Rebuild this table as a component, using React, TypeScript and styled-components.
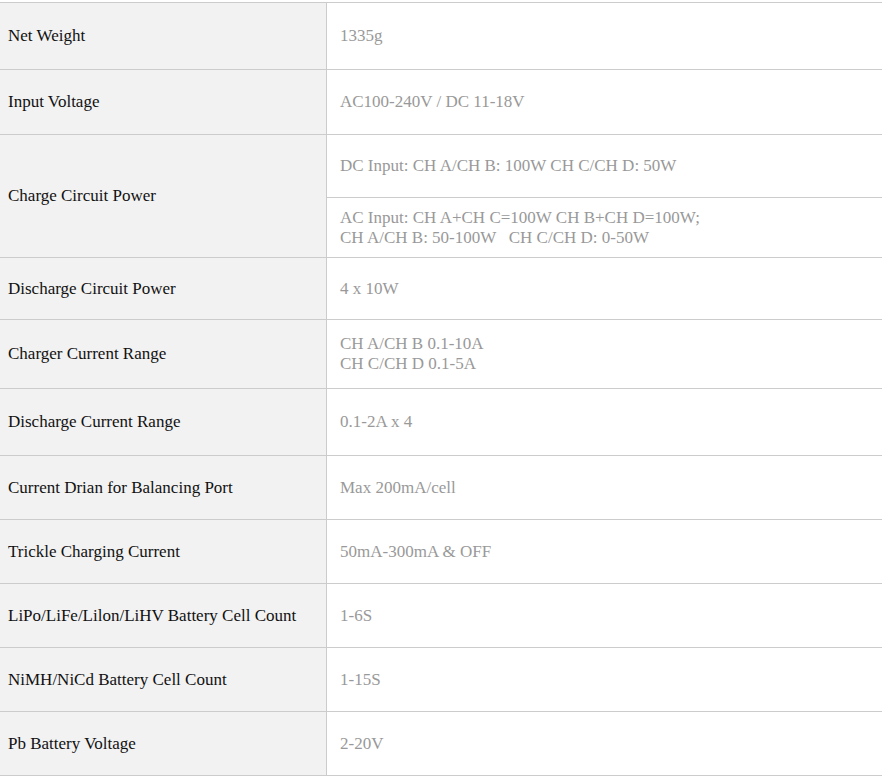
import React from "react";
import styled, { createGlobalStyle } from "styled-components";

const Global = createGlobalStyle`
  html, body { margin: 0; padding: 0; background: #fff; }
  body { font-family: "Liberation Serif", "Times New Roman", serif; }
`;

const Table = styled.div`
  margin-top: 2px;
  width: 882px;
  border-top: 1px solid #cccccc;
  display: flex;
  flex-direction: column;
  font-family: "Liberation Serif", "Times New Roman", serif;
  font-size: 17px;
  line-height: 20px;
`;

const Row = styled.div<{ $h: number }>`
  display: grid;
  grid-template-columns: 327px 1fr;
  height: ${(p) => p.$h}px;
  box-sizing: border-box;
  border-bottom: 1px solid #cccccc;
`;

const Label = styled.div`
  background: #f2f2f2;
  border-right: 1px solid #cccccc;
  color: #111;
  display: flex;
  align-items: center;
  padding-left: 8px;
`;

const Value = styled.div`
  color: #999999;
  display: flex;
  align-items: center;
  padding-left: 13px;
`;

const SubStack = styled.div`
  display: flex;
  flex-direction: column;
`;

const SubValue = styled.div<{ $h: number; $last?: boolean }>`
  height: ${(p) => p.$h}px;
  box-sizing: border-box;
  border-bottom: ${(p) => (p.$last ? "none" : "1px solid #cccccc")};
  color: #999999;
  display: flex;
  align-items: center;
  padding-left: 13px;
  white-space: pre;
`;

const Lines = styled.div`
  white-space: pre;
`;

type Spec = { label: string; value: string; h: number };

const rowsTop: Spec[] = [
  { label: "Net Weight", value: "1335g", h: 67 },
  { label: "Input Voltage", value: "AC100-240V / DC 11-18V", h: 65 },
];

const rowsBottom: Spec[] = [
  { label: "Discharge Circuit Power", value: "4 x 10W", h: 62 },
  { label: "Charger Current Range", value: "CH A/CH B 0.1-10A\nCH C/CH D 0.1-5A", h: 69 },
  { label: "Discharge Current Range", value: "0.1-2A x 4", h: 67 },
  { label: "Current Drian for Balancing Port", value: "Max 200mA/cell", h: 64 },
  { label: "Trickle Charging Current", value: "50mA-300mA & OFF", h: 64 },
  { label: "LiPo/LiFe/Lilon/LiHV Battery Cell Count", value: "1-6S", h: 64 },
  { label: "NiMH/NiCd Battery Cell Count", value: "1-15S", h: 64 },
  { label: "Pb Battery Voltage", value: "2-20V", h: 64 },
];

const renderRow = (r: Spec) => (
  <Row key={r.label} $h={r.h}>
    <Label>{r.label}</Label>
    <Value>
      <Lines>{r.value}</Lines>
    </Value>
  </Row>
);

export default function App() {
  return (
    <>
      <Global />
      <Table>
        {rowsTop.map(renderRow)}
        <Row $h={123}>
          <Label>Charge Circuit Power</Label>
          <SubStack>
            <SubValue $h={63}>DC Input: CH A/CH B: 100W CH C/CH D: 50W</SubValue>
            <SubValue $h={59} $last>
              {"AC Input: CH A+CH C=100W CH B+CH D=100W;\nCH A/CH B: 50-100W   CH C/CH D: 0-50W"}
            </SubValue>
          </SubStack>
        </Row>
        {rowsBottom.map(renderRow)}
      </Table>
    </>
  );
}
